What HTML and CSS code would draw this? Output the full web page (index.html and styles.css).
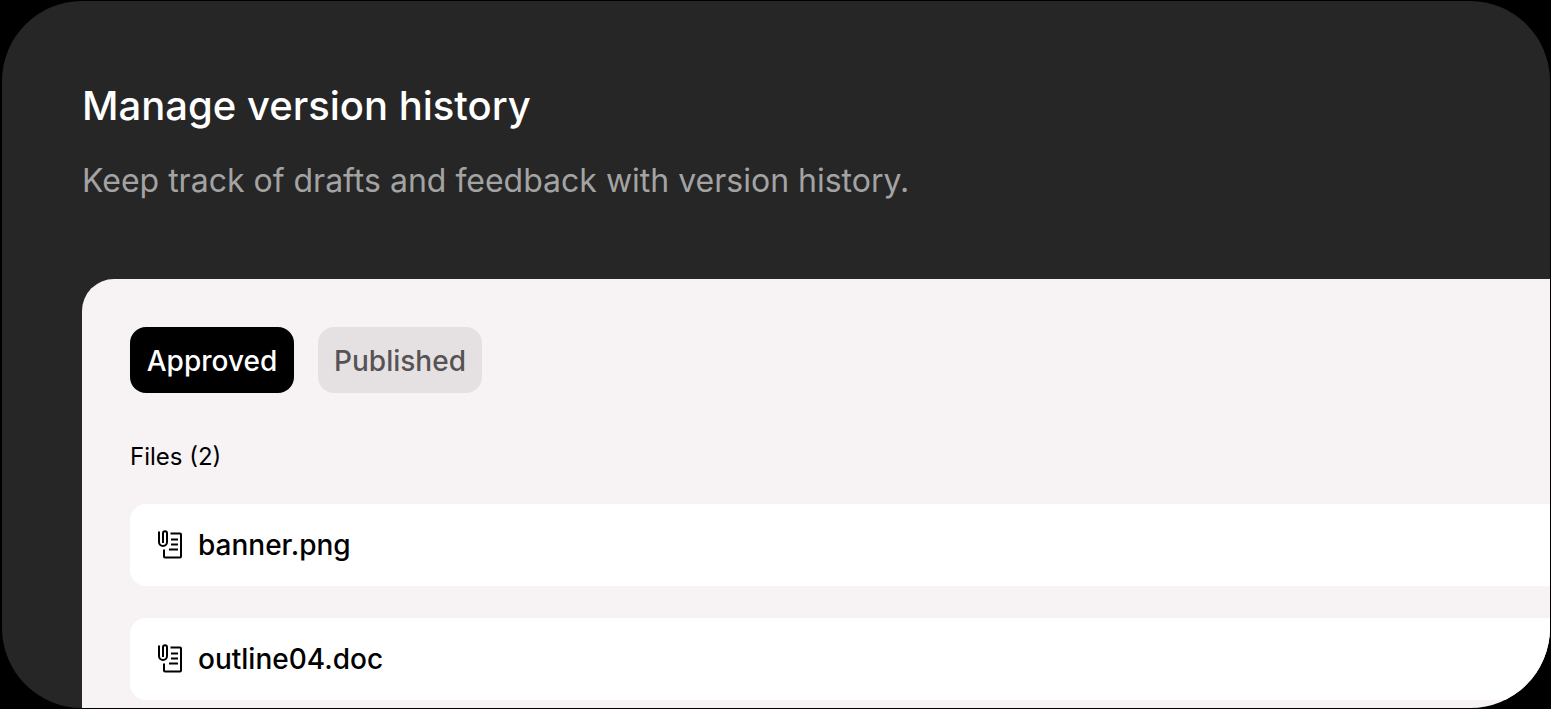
FILE: index.html
```html
<!DOCTYPE html>
<html lang="en">
<head>
<meta charset="utf-8">
<meta name="viewport" content="width=device-width, initial-scale=1">
<title>Manage version history</title>
<link rel="stylesheet" href="styles.css">
</head>
<body>
<svg class="sprite" aria-hidden="true">
  <symbol id="file-clip" viewBox="0 0 24 30">
    <g fill="none" stroke="currentColor" stroke-width="2">
      <path d="M1 1.500v10.500a4 4 0 0 0 8 0V3.300a2 2 0 0 0-4 0V13"/>
      <path d="M12.500 3.500H22a1 1 0 0 1 1 1v22a1 1 0 0 1-1 1H7a1 1 0 0 1-1-1v-7"/>
      <path stroke-width="1.800" d="M13 9.500h7M13 14.500h7M11 19.500h9"/>
    </g>
  </symbol>
</svg>
<main class="card">
  <header class="intro">
    <h1 class="title">Manage version history</h1>
    <p class="subtitle">Keep track of drafts and feedback with version history.</p>
  </header>
  <section class="panel">
    <div class="tabs">
      <button class="tab tab-active" type="button">Approved</button>
      <button class="tab" type="button">Published</button>
    </div>
    <h2 class="count">Files (2)</h2>
    <ul class="files">
      <li class="file"><svg class="file-icon" aria-hidden="true"><use href="#file-clip"/></svg><span>banner.png</span></li>
      <li class="file"><svg class="file-icon" aria-hidden="true"><use href="#file-clip"/></svg><span>outline04.doc</span></li>
    </ul>
  </section>
</main>
</body>
</html>
```

FILE: styles.css
```css
* {
  box-sizing: border-box;
}

body {
  display: flex;
  min-height: 100vh;
  margin: 0;
  padding: 1px 1px 1px 2px;
  background: #000;
  font-family: Inter, "Liberation Sans", sans-serif;
}

.sprite {
  display: none;
}

.card {
  display: flex;
  flex: 1;
  flex-direction: column;
  gap: 78px;
  min-width: 0;
  padding: 80px 0 0 80px;
  overflow: hidden;
  border-radius: 80px;
  background: #262626;
}

.intro {
  display: flex;
  flex-direction: column;
  gap: 30px;
}

.title,
.subtitle,
.count {
  margin: 0;
}

.title {
  color: #fff;
  font-size: 40px;
  font-weight: 500;
  line-height: 50px;
}

.subtitle {
  color: #a3a3a3;
  font-size: 32px;
  font-weight: 400;
  line-height: 40px;
}

.panel {
  flex: 1;
  padding: 48px 0 8px 48px;
  border-top-left-radius: 32px;
  background: #f7f3f5;
}

.tabs {
  display: flex;
  gap: 24px;
}

.tab {
  min-width: 164px;
  padding: 17px 16px 15px;
  border: 0;
  border-radius: 16px;
  background: #e5e1e3;
  color: #575355;
  font: inherit;
  font-size: 28px;
  font-weight: 500;
  line-height: 34px;
}

.tab-active {
  background: #000;
  color: #fff;
}

.count {
  margin-top: 48px;
  color: #000;
  font-size: 24px;
  font-weight: 400;
  line-height: 32px;
}

.files {
  display: flex;
  flex-direction: column;
  gap: 32px;
  margin: 31px 0 0;
  padding: 0;
  list-style: none;
}

.file {
  display: flex;
  align-items: center;
  gap: 16px;
  padding: 24px 28px;
  border-radius: 16px 0 0 16px;
  background: #fff;
  color: #000;
  font-size: 28px;
  font-weight: 500;
  line-height: 34px;
}

.file-icon {
  width: 24px;
  height: 30px;
}
```
